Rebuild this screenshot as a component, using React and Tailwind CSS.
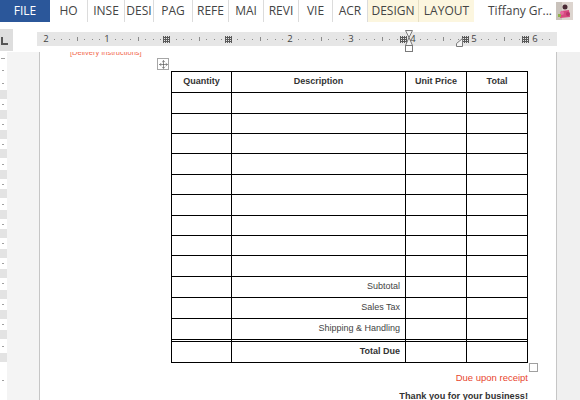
import React from "react";
import { Move } from "lucide-react";

const tabs = [
  { l: "HO", c: "w-[38px]" },
  { l: "INSE", c: "w-[37px]" },
  { l: "DESI", c: "w-[29px]" },
  { l: "PAG", c: "w-[39px]" },
  { l: "REFE", c: "w-[36px]" },
  { l: "MAI", c: "w-[35px]" },
  { l: "REVI", c: "w-[35px]" },
  { l: "VIE", c: "w-[34px]" },
  { l: "ACR", c: "w-[35px]" },
];

function TabBar() {
  return (
    <div className="h-[22px] flex items-stretch bg-white text-[12px] text-[#444] font-['Open_Sans',sans-serif] shrink-0">
      <div className="w-[50px] bg-[#2b579a] text-white flex items-center justify-center">FILE</div>
      {tabs.map((t) => (
        <div key={t.l} className={`${t.c} border-r border-[#dcdcdc] flex items-center justify-center overflow-hidden whitespace-nowrap`}>
          {t.l}
        </div>
      ))}
      <div className="w-[51px] bg-[#fcf6df] border-r border-[#e6dfc4] flex items-center justify-center">DESIGN</div>
      <div className="w-[55px] bg-[#fcf6df] flex items-center justify-center">LAYOUT</div>
      <div className="flex items-center pl-[14px] w-[82px] whitespace-nowrap">
        <span>Tiffany Gr...</span>
        <span className="ml-[5px] text-[7px] text-[#777]">▼</span>
      </div>
      <div className="flex items-center">
        <svg width="17" height="18" viewBox="0 0 17 18">
          <rect width="17" height="18" fill="#ddd5cf" />
          <rect x="0" y="0" width="6" height="18" fill="#c9c2bb" />
          <circle cx="9" cy="5" r="2.5" fill="#4a2a35" />
          <path d="M5 9 L13 8 L14 15 L4 16 Z" fill="#d8487f" />
          <circle cx="6" cy="11" r="2" fill="#e66aa0" />
          <circle cx="12" cy="12" r="2" fill="#b8326a" />
          <rect x="2" y="12" width="3" height="3" fill="#8fb34a" />
        </svg>
      </div>
    </div>
  );
}

function RulerRow() {
  const ticks = [];
  for (let k = -17; k <= 52; k++) {
    if (k % 8 === 0) continue;
    const x = 168 + (k * 61) / 8;
    if (x < 40 || x > 554) continue;
    if (k % 4 === 0) ticks.push(<rect key={k} x={Math.round(x)} y="15" width="1" height="4" fill="#8a8a8a" />);
    else ticks.push(<rect key={k} x={Math.round(x)} y="17" width="1" height="1" fill="#8a8a8a" />);
  }
  const markers = [166, 228, 403, 465, 525];
  return (
    <div className="h-[30px] relative shrink-0 bg-white">
      <div className="absolute left-0 top-[7px] w-[13px] h-[22px] bg-[#dedede]">
        <svg width="13" height="22" className="absolute left-0 top-0">
          <rect x="1" y="8" width="2" height="8" fill="#555" />
          <rect x="1" y="14" width="7" height="2" fill="#555" />
        </svg>
      </div>
      <div className="absolute left-[37px] top-[10px] w-[520px] h-[14px] bg-[#e6e6e6]" />
      <svg width="580" height="30" className="absolute left-0 top-0">
        {ticks}
        {markers.map((m) => (
          <g key={m} fill="#5a5a5a">
            <rect x={m - 3} y="14" width="1" height="7" />
            <rect x={m - 1} y="14" width="1" height="7" />
            <rect x={m + 1} y="14" width="1" height="7" />
            <rect x={m + 3} y="14" width="1" height="7" />
            <rect x={m - 3} y="15" width="7" height="1" />
            <rect x={m - 3} y="17" width="7" height="1" />
            <rect x={m - 3} y="19" width="7" height="1" />
          </g>
        ))}
        <path d="M405.5 8.5 H412.5 L409 15.5 L412.5 23.5 H405.5 L409 15.5 Z" fill="#f2f2f2" stroke="#7a7a7a" />
        <rect x="405.5" y="23.5" width="7" height="6" fill="#fff" stroke="#7a7a7a" />
        <path d="M462.5 16.5 L462.5 24.5 L456.5 24.5 L456.5 21.5 Z" fill="#f4f4f4" stroke="#7a7a7a" />
      </svg>
      {[
        ["2", "left-[46px]"],
        ["1", "left-[107px]"],
        ["2", "left-[290px]"],
        ["3", "left-[351px]"],
        ["4", "left-[413px]"],
        ["5", "left-[474px]"],
        ["6", "left-[535px]"],
      ].map(([n, c], i) => (
        <span key={i} className={`absolute ${c} top-[10px] h-[14px] leading-[14px] -translate-x-1/2 text-[9.5px] text-[#444] font-['Open_Sans',sans-serif]`}>
          {n}
        </span>
      ))}
    </div>
  );
}

function WSeg({ h }) {
  return (
    <div className={`${h} bg-white flex items-center`}>
      <div className="ml-[2px] w-[2px] h-[1px] bg-[#a0a0a0]" />
    </div>
  );
}
function GSeg() {
  return <div className="h-[9px] bg-[#e3e3e3] shrink-0" />;
}

function LeftRuler() {
  const whites = ["h-[12px]", "h-[11px]", "h-[11px]", "h-[12px]", "h-[11px]", "h-[12px]", "h-[11px]", "h-[11px]", "h-[12px]", "h-[12px]", "h-[12px]", "h-[12px]", "h-[14px]"];
  return (
    <div className="w-[7px] flex flex-col overflow-hidden shrink-0">
      <div className="h-[38px] bg-white flex flex-col justify-around shrink-0">
        <div className="ml-[1px] w-[4px] h-[1px] bg-[#a0a0a0]" />
        <div className="ml-[2px] w-[2px] h-[1px] bg-[#a0a0a0]" />
        <div className="ml-[2px] w-[2px] h-[1px] bg-[#a0a0a0]" />
      </div>
      {whites.map((h, i) => (
        <React.Fragment key={i}>
          <GSeg />
          <WSeg h={h} />
        </React.Fragment>
      ))}
      <GSeg />
      <WSeg h="h-[40px]" />
    </div>
  );
}

function Cell({ w, children, align = "center", bold, top }) {
  return (
    <div
      className={`${w} h-full border-r border-black ${top ? "border-t-[3px] border-t-black border-double" : ""} flex items-center ${
        align === "right" ? "justify-end pr-[5px]" : "justify-center"
      } ${bold ? "font-bold text-[#333]" : "text-[#444]"} whitespace-nowrap`}
    >
      {children}
    </div>
  );
}

function Row({ h, cells = [], align, bold, noBottom, top }) {
  return (
    <div className={`${h} flex ${noBottom ? "" : "border-b border-black"}`}>
      <Cell w="w-[60px]" top={top} bold={bold}>{cells[0]}</Cell>
      <Cell w="w-[174px]" align={align} bold={bold} top={top}>{cells[1]}</Cell>
      <Cell w="w-[61px]" bold={bold} top={top}>{cells[2]}</Cell>
      <Cell w="w-[61px]" bold={bold} top={top}>{cells[3]}</Cell>
    </div>
  );
}

function Page() {
  const empties = ["h-[21px]", "h-[20px]", "h-[20px]", "h-[21px]", "h-[20px]", "h-[21px]", "h-[20px]", "h-[20px]", "h-[21px]"];
  return (
    <div className="w-[516px] relative overflow-hidden bg-white shrink-0 font-['Liberation_Sans',Arial,sans-serif]">
      <div className="pl-[30px] -mt-[4px] h-[9px] text-[7.5px] leading-[9px] text-[#f2694f] whitespace-nowrap">[Delivery Instructions]</div>
      <div className="absolute left-[117px] top-[6px] w-[12px] h-[12px] border border-[#a6a6a6] bg-white flex items-center justify-center">
        <Move size={9} strokeWidth={1.6} color="#444" />
      </div>
      <div className="ml-[131px] mt-[14px] w-[357px] border-l border-t border-black text-[9px]">
        <Row h="h-[21px]" bold cells={["Quantity", "Description", "Unit Price", "Total"]} />
        {empties.map((h, i) => (
          <Row key={i} h={h} />
        ))}
        <Row h="h-[21px]" align="right" cells={["", "Subtotal"]} />
        <Row h="h-[21px]" align="right" cells={["", "Sales Tax"]} />
        <Row h="h-[20px]" align="right" noBottom cells={["", "Shipping & Handling"]} />
        <Row h="h-[24px]" align="right" bold top cells={["", "Total Due"]} />
      </div>
      <div className="absolute left-[489px] top-[311px] w-[9px] h-[9px] border border-[#a0a0a0] bg-white" />
      <div className="ml-[131px] w-[357px] mt-[9px] text-right text-[9.5px] leading-[11px] text-[#e8462e]">Due upon receipt</div>
      <div className="ml-[131px] w-[357px] mt-[8px] text-right text-[9.2px] leading-[11px] font-bold text-[#333]">Thank you for your business!</div>
    </div>
  );
}

export default function App() {
  return (
    <div className="w-[580px] h-[400px] overflow-hidden bg-white flex flex-col">
      <TabBar />
      <RulerRow />
      <div className="flex flex-1 min-h-0">
        <LeftRuler />
        <div className="w-[33px] bg-[#f4f4f4] border-r border-[#c6c6c6] shrink-0" />
        <Page />
        <div className="flex-1 bg-[#f0f0f0] border-l border-[#c6c6c6]" />
      </div>
    </div>
  );
}
